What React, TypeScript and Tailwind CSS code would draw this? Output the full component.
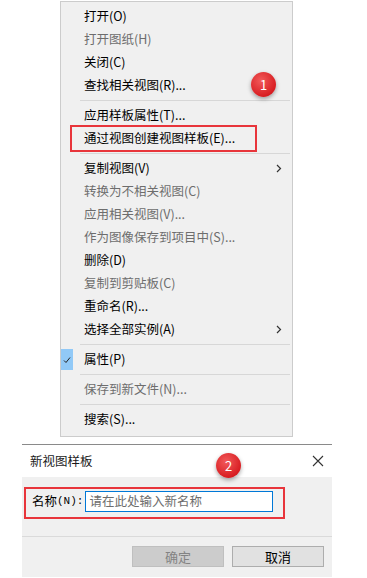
import React from 'react'

type Item =
  | { kind: 'sep' }
  | { kind: 'item'; label: string; disabled?: boolean; sub?: boolean; checked?: boolean }

const items: Item[] = [
  { kind: 'item', label: '打开(O)' },
  { kind: 'item', label: '打开图纸(H)', disabled: true },
  { kind: 'item', label: '关闭(C)' },
  { kind: 'item', label: '查找相关视图(R)...' },
  { kind: 'sep' },
  { kind: 'item', label: '应用样板属性(T)...' },
  { kind: 'item', label: '通过视图创建视图样板(E)...' },
  { kind: 'sep' },
  { kind: 'item', label: '复制视图(V)', sub: true },
  { kind: 'item', label: '转换为不相关视图(C)', disabled: true },
  { kind: 'item', label: '应用相关视图(V)...', disabled: true },
  { kind: 'item', label: '作为图像保存到项目中(S)...', disabled: true },
  { kind: 'item', label: '删除(D)' },
  { kind: 'item', label: '复制到剪贴板(C)', disabled: true },
  { kind: 'item', label: '重命名(R)...' },
  { kind: 'item', label: '选择全部实例(A)', sub: true },
  { kind: 'sep' },
  { kind: 'item', label: '属性(P)', checked: true },
  { kind: 'sep' },
  { kind: 'item', label: '保存到新文件(N)...', disabled: true },
  { kind: 'sep' },
  { kind: 'item', label: '搜索(S)...' },
]

function Badge({ n, className }: { n: string; className: string }) {
  return (
    <div
      className={`absolute w-[25px] h-[25px] rounded-full flex items-center justify-center text-white text-[13px] shadow-[0_2px_4px_rgba(0,0,0,0.35)] bg-[radial-gradient(circle_at_40%_35%,#f25a5a,#d81e22_70%,#b5141a)] ${className}`}
    >
      {n}
    </div>
  )
}

export default function App() {
  return (
    <div
      className="relative w-[367px] h-[578px] bg-white overflow-hidden text-[12.5px] text-black"
      style={{ fontFamily: '"Noto Sans CJK SC", "Noto Sans", sans-serif' }}
    >
      {/* context menu */}
      <div className="ml-[60px] mt-[1px] w-[233px] bg-[#f0f0f0] border border-[#cccccc] pt-[3px] pb-[5px]">
        {items.map((it, i) =>
          it.kind === 'sep' ? (
            <div key={i} className="h-[7px] flex items-center pl-[19px] pr-[2px]">
              <div className="h-px w-full bg-[#d7d7d7]" />
            </div>
          ) : (
            <div key={i} className="relative h-[23px] flex items-center pl-[23px] pr-[10px]">
              {it.checked && (
                <div className="absolute left-0 top-[1px] w-[12px] h-[21px] bg-[#91c9f7] flex items-center justify-center">
                  <svg width="8" height="8" viewBox="0 0 8 8">
                    <path d="M1 4.5 L3 6.5 L7 1.5" stroke="#222" strokeWidth="1" fill="none" />
                  </svg>
                </div>
              )}
              <span className={`flex-1 leading-none ${it.disabled ? 'text-[#6d6d6d]' : ''}`}>{it.label}</span>
              {it.sub && (
                <svg width="6" height="9" viewBox="0 0 6 9">
                  <path d="M1 1 L4.5 4.5 L1 8" stroke="#333" strokeWidth="1.2" fill="none" />
                </svg>
              )}
            </div>
          )
        )}
      </div>

      {/* dialog */}
      <div className="ml-[22px] mt-[7px] w-[310px] border-t border-[#8a8a8a]">
        <div className="h-[32px] bg-white flex items-center justify-between pl-[8px] pr-[8px]">
          <span className="leading-none text-[#1a1a1a]">新视图样板</span>
          <svg width="12" height="12" viewBox="0 0 12 12">
            <path d="M1 1 L11 11 M11 1 L1 11" stroke="#333" strokeWidth="1.1" />
          </svg>
        </div>
        <div className="bg-[#f0f0f0] h-[59px] pt-[14px] pl-[10px] flex items-start">
          <div className="flex items-center h-[21px]">
            <span className="leading-none">名称</span>
            <span className="leading-none text-[11px]" style={{ fontFamily: '"Liberation Mono", monospace' }}>
              (N):
            </span>
            <div className="ml-[2px] w-[188px] h-[21px] bg-white border border-[#0078d7] flex items-center pl-[3px] text-[#6d6d6d]">
              请在此处输入新名称
            </div>
          </div>
        </div>
        <div className="h-px bg-[#dadada]" />
        <div className="bg-[#f0f0f0] h-[40px] flex items-start justify-end gap-[8px] pt-[9px] pr-[8px]">
          <div className="w-[92px] h-[21px] bg-[#cccccc] border border-[#bfbfbf] flex items-center justify-center text-[#838383] text-[13px]">
            确定
          </div>
          <div className="w-[92px] h-[21px] bg-[#e1e1e1] border border-[#adadad] flex items-center justify-center text-[13px]">
            取消
          </div>
        </div>
      </div>

      {/* annotations */}
      <div className="absolute left-[70px] top-[125px] w-[187px] h-[27px] border-2 border-[#e8353b]" />
      <div className="absolute left-[24px] top-[487px] w-[261px] h-[32px] border-2 border-[#e8353b]" />
      <Badge n="1" className="left-[251px] top-[72px]" />
      <Badge n="2" className="left-[216px] top-[453px]" />
    </div>
  )
}
